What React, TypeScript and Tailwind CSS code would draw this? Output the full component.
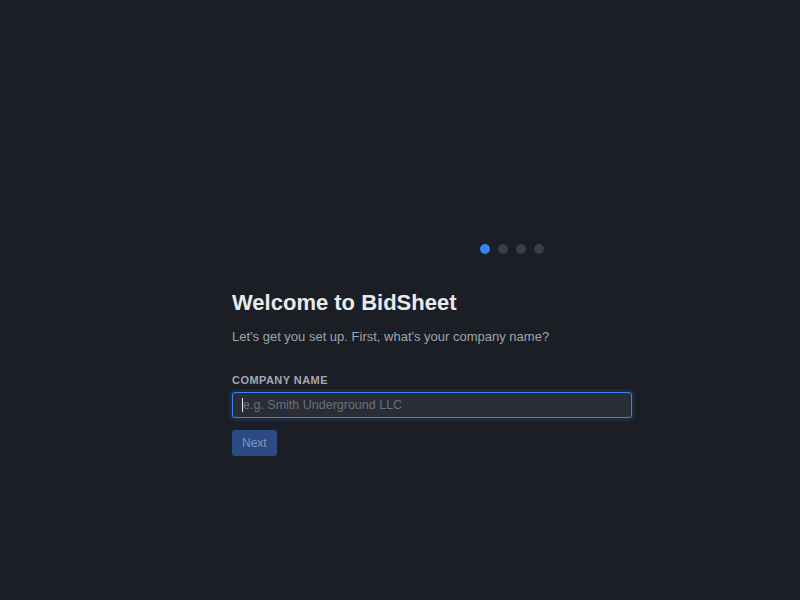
import React from "react";

export default function App() {
  return (
    <div
      className="w-full h-[600px] bg-[#1b1e25] overflow-hidden"
      style={{ fontFamily: '"Liberation Sans", Arial, sans-serif' }}
    >
      <div className="flex justify-center pt-[244px] pl-[224px]">
        <div className="flex gap-2">
          <span className="w-[10px] h-[10px] rounded-full bg-[#3b82f6]" />
          <span className="w-[10px] h-[10px] rounded-full bg-[#3a3e48]" />
          <span className="w-[10px] h-[10px] rounded-full bg-[#3a3e48]" />
          <span className="w-[10px] h-[10px] rounded-full bg-[#3a3e48]" />
        </div>
      </div>
      <div className="ml-[232px] w-[400px] mt-[35px] flex flex-col">
        <h1 className="text-[22px] leading-[28px] font-bold text-[#e8eaee]">Welcome to BidSheet</h1>
        <p className="mt-[11px] text-[13px] leading-[18px] text-[#9ea4ae]">
          Let's get you set up. First, what's your company name?
        </p>
        <label className="mt-[27px] text-[11px] leading-[14px] font-bold tracking-[0.04em] uppercase text-[#a3a8b1]">
          Company Name
        </label>
        <div className="mt-[5px] h-[26px] w-[400px] rounded-[3px] border border-[#3b82f6] bg-[#292d35] shadow-[0_0_0_3px_rgba(59,130,246,0.12)] flex items-center px-[9px]">
          <span className="w-px h-[14px] bg-[#e8eaee]" />
          <span className="text-[12.5px] text-[#6b717c]">e.g. Smith Underground LLC</span>
        </div>
        <div className="mt-[12px]">
          <button className="h-[26px] px-[10px] rounded-[3px] bg-[#2a4b84] text-[12px] text-[#8396b8]">
            Next
          </button>
        </div>
      </div>
    </div>
  );
}
